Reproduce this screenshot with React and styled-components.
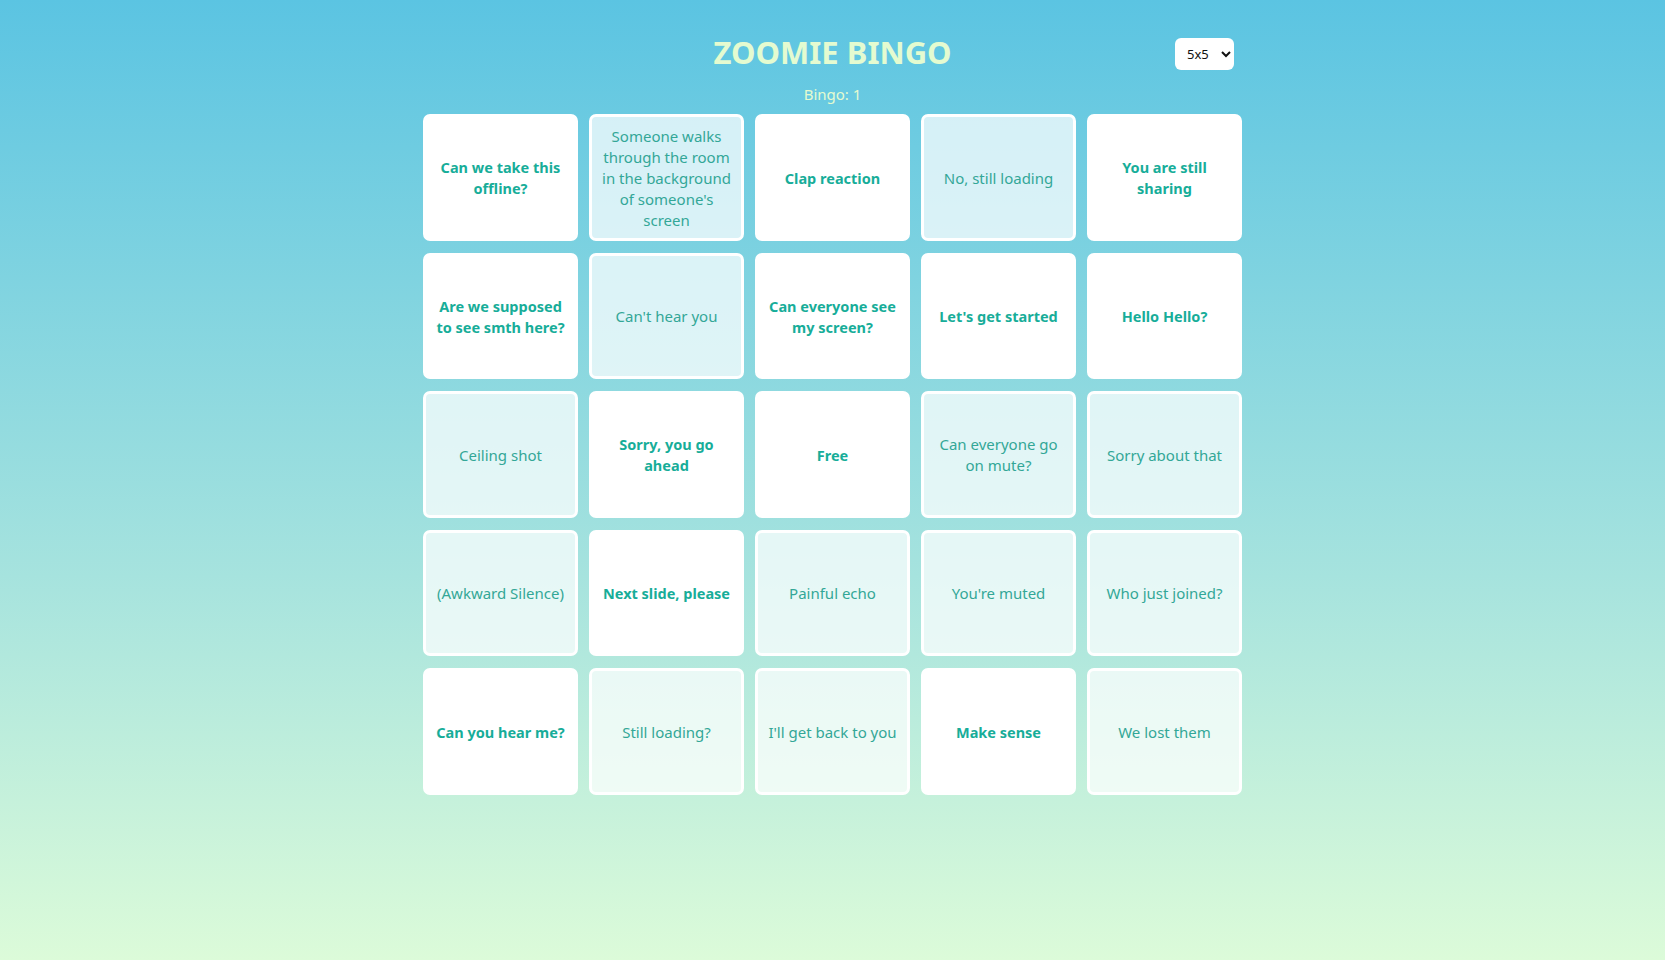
import React from 'react';
import styled, { createGlobalStyle } from 'styled-components';

const GlobalStyle = createGlobalStyle`
  html, body {
    margin: 0;
    padding: 0;
  }
  body {
    min-height: 100vh;
    font-family: "Segoe UI", "Noto Sans", "Open Sans", sans-serif;
    background: linear-gradient(180deg, #5bc4e2 0%, #a6e3de 60%, #dcfbd9 100%);
    background-attachment: fixed;
  }
`;

const cells = [
  { text: 'Can we take this offline?', checked: false },
  { text: "Someone walks through the room in the background of someone's screen", checked: true },
  { text: 'Clap reaction', checked: false },
  { text: 'No, still loading', checked: true },
  { text: 'You are still sharing', checked: false },
  { text: 'Are we supposed to see smth here?', checked: false },
  { text: "Can't hear you", checked: true },
  { text: 'Can everyone see my screen?', checked: false },
  { text: "Let's get started", checked: false },
  { text: 'Hello Hello?', checked: false },
  { text: 'Ceiling shot', checked: true },
  { text: 'Sorry, you go ahead', checked: false },
  { text: 'Free', checked: false },
  { text: 'Can everyone go on mute?', checked: true },
  { text: 'Sorry about that', checked: true },
  { text: '(Awkward Silence)', checked: true },
  { text: 'Next slide, please', checked: false },
  { text: 'Painful echo', checked: true },
  { text: "You're muted", checked: true },
  { text: 'Who just joined?', checked: true },
  { text: 'Can you hear me?', checked: false },
  { text: 'Still loading?', checked: true },
  { text: "I'll get back to you", checked: true },
  { text: 'Make sense', checked: false },
  { text: 'We lost them', checked: true },
];

const Page = styled.div`
  display: flex;
  flex-direction: column;
  align-items: center;
  min-height: 100vh;
  padding-top: 28px;
  box-sizing: border-box;
`;

const Header = styled.header`
  position: relative;
  width: 819px;
  display: flex;
  justify-content: center;
  align-items: center;
  height: 48px;
`;

const Title = styled.h1`
  margin: 0;
  font-size: 31px;
  font-weight: 700;
  color: #e4fbd0;
`;

const SizeSelect = styled.select`
  position: absolute;
  right: 8px;
  top: 10px;
  width: 59px;
  height: 32px;
  border: none;
  border-radius: 6px;
  background: #fff;
  padding: 0 4px 0 8px;
  font-family: "Segoe UI", "Noto Sans", sans-serif;
  font-size: 13px;
  color: #111;
`;

const Score = styled.div`
  margin-top: 8px;
  font-size: 15px;
  color: #e4fbd0;
  line-height: 20px;
`;

const Board = styled.div`
  display: grid;
  grid-template-columns: repeat(5, 155px);
  grid-auto-rows: 126.5px;
  column-gap: 11px;
  row-gap: 12px;
  margin-top: 10px;
`;

const Cell = styled.button`
  display: flex;
  align-items: center;
  justify-content: center;
  box-sizing: border-box;
  padding: 2px 8px 0;
  border-radius: 7px;
  border: 3px solid #fff;
  background: ${p => (p.$checked ? 'rgba(255, 255, 255, 0.72)' : '#fff')};
  color: ${p => (p.$checked ? '#33a797' : '#17ad99')};
  font-family: "Segoe UI", "Noto Sans", sans-serif;
  font-size: ${p => (p.$checked ? '15px' : '14.5px')};
  font-weight: ${p => (p.$checked ? 400 : 700)};
  line-height: 21px;
  text-align: center;
  cursor: pointer;
`;

const App = () => {
  const [board, setBoard] = React.useState(cells);

  const toggle = (i) => {
    setBoard(prev => prev.map((c, j) => (j === i ? { ...c, checked: !c.checked } : c)));
  };

  return (
    <>
      <GlobalStyle />
      <Page>
        <Header>
          <Title>ZOOMIE BINGO</Title>
          <SizeSelect defaultValue="5">
            <option value="3">3x3</option>
            <option value="4">4x4</option>
            <option value="5">5x5</option>
          </SizeSelect>
        </Header>
        <Score>Bingo: 1</Score>
        <Board>
          {board.map((c, i) => (
            <Cell key={i} $checked={c.checked} onClick={() => toggle(i)}>
              {c.text}
            </Cell>
          ))}
        </Board>
      </Page>
    </>
  );
};

export default App;
